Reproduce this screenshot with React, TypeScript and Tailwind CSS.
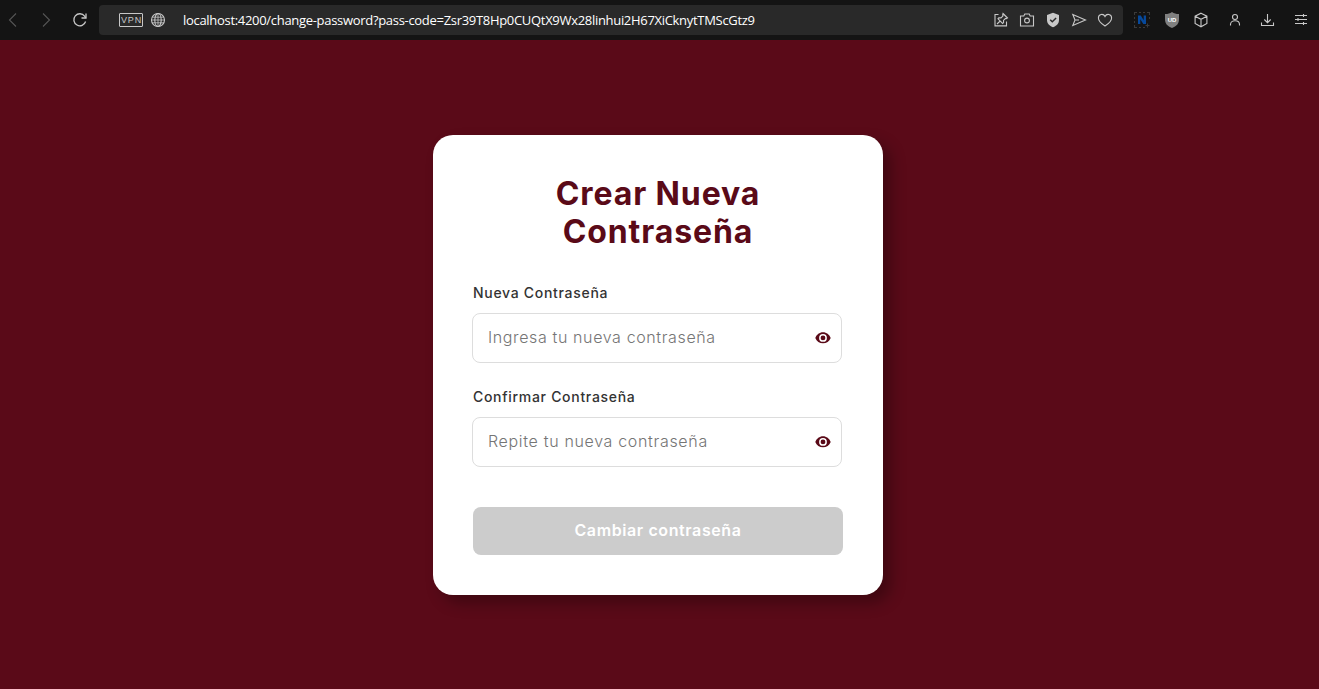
import type { ReactNode } from "react";

function Icon({ size = 16, className = "", children }: { size?: number; className?: string; children: ReactNode }) {
  return (
    <svg
      width={size}
      height={size}
      viewBox="0 0 16 16"
      fill="none"
      stroke="currentColor"
      strokeWidth="1.1"
      className={`shrink-0 ${className}`}
    >
      {children}
    </svg>
  );
}

function BrowserBar() {
  return (
    <header className="flex h-10 items-center bg-[#141414] text-[#c8c8c8]">
      <Icon className="ml-[5px] text-[#555]"><path d="M11 1.5 4.5 8l6.5 6.5" /></Icon>
      <Icon className="ml-[17px] text-[#555]"><path d="M5 1.5 11.5 8 5 14.5" /></Icon>
      <Icon className="ml-[18px]">
        <path d="M13.6 9.5A6 6 0 1 1 12.6 4.1L13.8 6" strokeWidth="1.3" />
        <path d="M14 1.5V6H9.5" strokeWidth="1.3" />
      </Icon>
      <div className="ml-[11px] flex h-[30px] w-[1024px] items-center rounded bg-[#292929]">
        <span className="ml-5 flex h-[14px] w-6 items-center justify-center rounded-[1px] border border-[#c8c8c8] pl-px font-['Liberation_Sans'] text-[9px] leading-none tracking-[0.8px]">
          VPN
        </span>
        <Icon className="ml-[7px]">
          <circle cx="8" cy="8" r="6.5" />
          <ellipse cx="8" cy="8" rx="3.2" ry="6.5" />
          <path d="M2.3 5.2h11.4M2.3 10.8h11.4M1.5 8h13M8 1.5v13" strokeWidth=".8" />
        </Icon>
        <span className="ml-[17px] whitespace-nowrap pt-0.5 font-['Open_Sans',sans-serif] text-[13px] tracking-[-0.305px] text-white">
          localhost:4200/change-password?pass-code=Zsr39T8Hp0CUQtX9Wx28linhui2H67XiCknytTMScGtz9
        </span>
        <div className="ml-auto mr-[10px] flex items-center gap-[10px]">
          <Icon>
            <path d="M5.5 2.5H2v11.4h11.5V9.5" />
            <path d="m10 1.5 4.5 4.5-1.2.7-.8-.3-2 2 .1 2.2-1 .8L5 6.800l.8-1 2.200.1 2-2-.3-.9zM7.200 9 4 12" />
          </Icon>
          <Icon>
            <path d="M1.500 4h3.300l1-2h4.400l1 2h3.300v10h-13z" />
            <circle cx="8" cy="8.500" r="2.400" />
          </Icon>
          <Icon>
            <path d="M8 .8 14 3v5c0 3.500-2.500 5.800-6 7.200C4.500 13.800 2 11.500 2 8V3z" fill="currentColor" stroke="none" />
            <path d="m5.200 7.700 2.100 2.100 3.800-3.800" stroke="#292929" strokeWidth="1.500" />
          </Icon>
          <Icon><path d="M1.800 2.500 14.500 8 1.800 13.500 4 8zM4 8h4" /></Icon>
          <Icon><path d="M8 14C4.500 11.700 1.400 9.200 1.400 5.900c0-4 5-4.800 6.600-1.400 1.600-3.400 6.600-2.600 6.600 1.400C14.600 9.200 11.500 11.700 8 14z" /></Icon>
        </div>
      </div>
      <Icon className="ml-[11px]">
        <path d="M.5 3V.5H3M5 .5h2M9 .5h2M13 .5h2.500V3M15.500 5v2M.5 5v2M.5 9v2M.5 13v2.500H3M5 15.500h2M9 15.500h2M13.500 11.500v4M11.500 13.500h4" stroke="#3b3b3b" />
        <path d="M4 12V3.500h2.800l2.900 4.700V3.500H12V12H9.300L6.300 7.200V12z" fill="#07499b" stroke="none" />
      </Icon>
      <div className="relative ml-[14px] flex size-4 items-center justify-center">
        <svg width="16" height="16" viewBox="0 0 16 16">
          <path d="M8 0c2 1.500 4 2 7 2v5c0 5-2.500 7-7 9-4.500-2-7-4-7-9V2c3 0 5-.5 7-2z" fill="#808080" />
        </svg>
        <span className="absolute inset-0 flex items-center justify-center font-['Liberation_Sans'] text-[6px] font-bold leading-none text-white">UD</span>
      </div>
      <Icon className="ml-[13px]"><path d="m8 1.200 5.900 3v7.300L8 14.800l-5.900-3.300V4.200zM2.100 4.300 8 7.300l5.900-3M8 7.300v7.500" /></Icon>
      <Icon className="ml-[18px]"><circle cx="8" cy="5" r="2.500" /><path d="M3.500 13.500v-1c0-5 9-5 9 0v1" /></Icon>
      <Icon className="ml-[17px]"><path d="M7.500 2v8.500M4.300 7.500l3.200 3.200 3.200-3.200M1.500 10.500V13.500h12v-3" /></Icon>
      <Icon className="ml-[17px]"><path d="M2 3.500h12M2 7.500h12M2 11.500h12M10.500 2v3M5 6v3M10.500 10v3" /></Icon>
    </header>
  );
}

function EyeIcon() {
  return (
    <svg width="16" height="12" viewBox="0 0 16 12" className="shrink-0 text-[#5a0a18]">
      <path
        fill="currentColor"
        fillRule="evenodd"
        d="M8 .3C4.500.3 1.600 2.600.3 5.900c1.300 3.300 4.200 5.400 7.700 5.400s6.400-2.100 7.700-5.400C14.400 2.600 11.500.3 8 .3zM8 2a3.900 3.900 0 1 1 0 7.800 3.900 3.900 0 0 1 0-7.800zM8 3.500a2.400 2.400 0 1 0 0 4.800 2.400 2.400 0 0 0 0-4.800z"
      />
    </svg>
  );
}

function PasswordField({
  label,
  placeholder,
  inputClass,
}: {
  label: string;
  placeholder: string;
  inputClass: string;
}) {
  return (
    <label className="block">
      <span className="block h-5 text-[14px] font-medium leading-5 tracking-[0.7px] text-[#333]">{label}</span>
      <span className="-ml-px mt-[10px] flex h-[50px] w-[370px] items-center rounded-lg border border-[#ddd] bg-white pl-[15px] pr-[10px]">
        <input
          type="password"
          placeholder={placeholder}
          className={`min-w-0 flex-1 bg-transparent pb-0.5 text-[16px] font-light outline-none placeholder:text-[#757575] ${inputClass}`}
        />
        <EyeIcon />
      </span>
    </label>
  );
}

export default function App() {
  return (
    <div className="flex h-screen flex-col overflow-hidden bg-[#5a0a18] font-[Inter,sans-serif]">
      <BrowserBar />
      <main className="flex flex-1 items-start justify-center pr-[3px] pt-[95px]">
        <section className="h-[460px] w-[450px] rounded-[20px] bg-white p-10 shadow-[8px_8px_15px_rgba(0,0,0,0.3)]">
          <h1 className="text-center text-[32px] font-bold leading-[38px] tracking-[0.9px] text-[#5a0a18]">
            Crear Nueva
            <br />
            Contraseña
          </h1>
          <form className="mt-8 flex flex-col gap-6">
            <PasswordField label="Nueva Contraseña" placeholder="Ingresa tu nueva contraseña" inputClass="tracking-[0.62px]" />
            <PasswordField label="Confirmar Contraseña" placeholder="Repite tu nueva contraseña" inputClass="tracking-[0.67px]" />
            <button type="button" disabled className="mt-4 h-12 w-[370px] rounded-lg bg-[#ccc] pb-0.5 text-[16px] font-semibold tracking-[0.6px] text-white">
              Cambiar contraseña
            </button>
          </form>
        </section>
      </main>
    </div>
  );
}
